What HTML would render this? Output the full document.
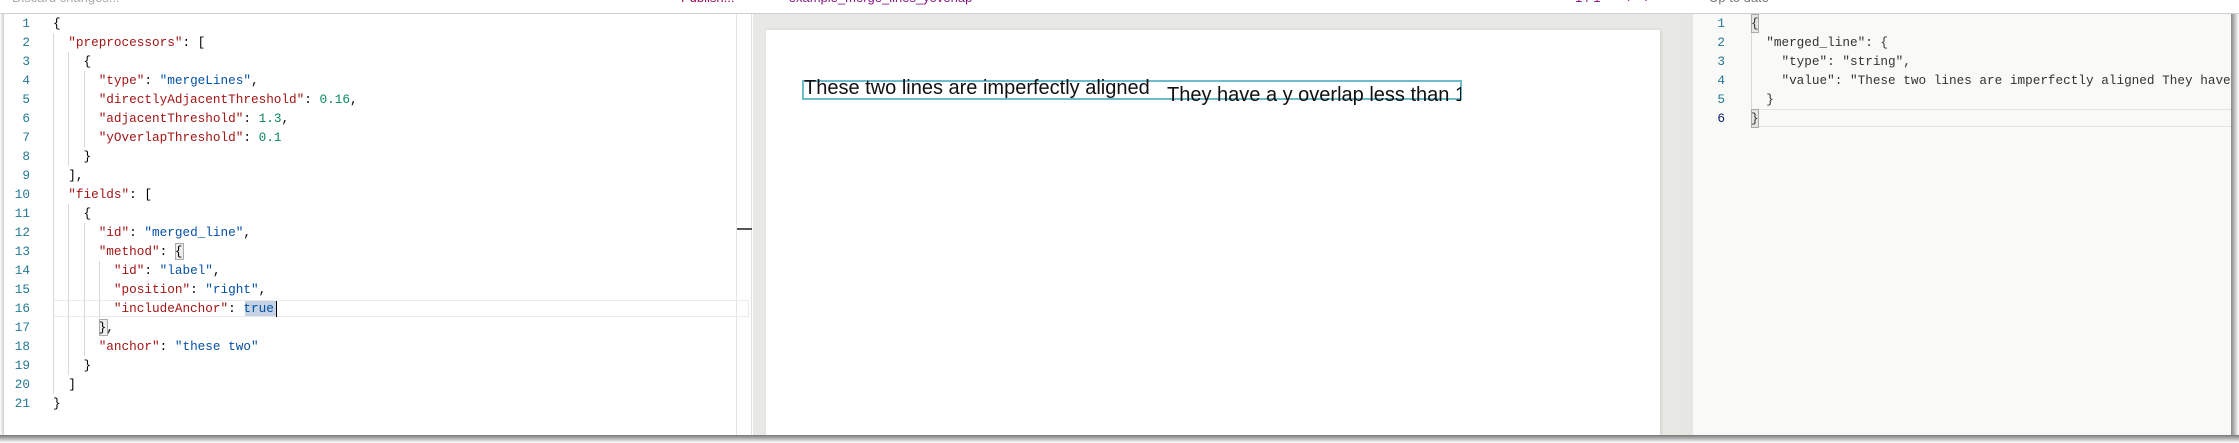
<!DOCTYPE html>
<html><head><meta charset="utf-8"><style>
*{margin:0;padding:0;box-sizing:border-box}
body{width:2239px;height:443px;background:#fff;position:relative;overflow:hidden;font-family:"Liberation Mono",monospace}
.abs{position:absolute}
.ln{position:absolute;width:30px;text-align:right;color:#237893;font-size:12.7px;line-height:19px}
.code{position:absolute;font-size:12.7px;line-height:19px;white-space:pre;color:#000}
.k{color:#a31515}.s{color:#0451a5}.n{color:#098658}
.g{position:absolute;width:1px;background:#d8d8d8}
.top{position:absolute;top:-10px;font-family:"Liberation Sans",sans-serif;font-size:13px}
</style></head><body>
<!-- top bar -->
<div class="top" style="left:12px;color:#aaa">Discard changes...</div>
<div class="top" style="left:681px;color:#a0105a">Publish...</div>
<div class="top" style="left:777px;color:#8a1a8a">•&nbsp; example_merge_lines_yoverlap</div>
<div class="top" style="left:1567px;color:#8a1a8a">• 1 / 1 &nbsp;&nbsp;&nbsp;&nbsp;&nbsp; ‹ &nbsp;&nbsp; ›</div>
<div class="top" style="left:1709px;color:#777">Up to date</div>
<div class="abs" style="left:0;top:13px;width:2239px;height:1px;background:#d0d0d0"></div>

<!-- left editor -->
<div class="abs" style="left:4px;top:14px;width:748px;height:421px;background:#fff;border-right:1px solid #e0e0e0"></div>
<div class="abs" style="left:736px;top:14px;width:1px;height:421px;background:#e4e4e4"></div>
<div class="abs" style="left:737px;top:228px;width:15px;height:2px;background:#555"></div>
<div class="abs" style="left:53px;top:300px;width:696px;height:17px;border:1px solid #eaeaea"></div>
<div class="abs" style="left:245px;top:301px;width:31px;height:15px;background:#c4d2e4"></div>
<div class="abs" style="left:276px;top:301px;width:1px;height:16px;background:#000"></div>
<div class="abs" style="left:175px;top:243px;width:9px;height:17px;border:1px solid #aaa;background:#eee"></div>
<div class="abs" style="left:99px;top:319px;width:9px;height:17px;border:1px solid #aaa;background:#eee"></div>
<div class="g" style="left:53px;top:33px;height:361px"></div>
<div class="g" style="left:68px;top:52px;height:114px"></div>
<div class="g" style="left:84px;top:71px;height:76px"></div>
<div class="g" style="left:68px;top:204px;height:171px"></div>
<div class="g" style="left:84px;top:223px;height:133px"></div>
<div class="g" style="left:99px;top:261px;height:57px"></div>
<div class="ln" style="left:0;top:14px">1<br>2<br>3<br>4<br>5<br>6<br>7<br>8<br>9<br>10<br>11<br>12<br>13<br>14<br>15<br>16<br>17<br>18<br>19<br>20<br>21</div>
<div class="code" style="left:53px;top:14px">{
  <span class="k">"preprocessors"</span>: [
    {
      <span class="k">"type"</span>: <span class="s">"mergeLines"</span>,
      <span class="k">"directlyAdjacentThreshold"</span>: <span class="n">0.16</span>,
      <span class="k">"adjacentThreshold"</span>: <span class="n">1.3</span>,
      <span class="k">"yOverlapThreshold"</span>: <span class="n">0.1</span>
    }
  ],
  <span class="k">"fields"</span>: [
    {
      <span class="k">"id"</span>: <span class="s">"merged_line"</span>,
      <span class="k">"method"</span>: {
        <span class="k">"id"</span>: <span class="s">"label"</span>,
        <span class="k">"position"</span>: <span class="s">"right"</span>,
        <span class="k">"includeAnchor"</span>: <span class="s">true</span>
      },
      <span class="k">"anchor"</span>: <span class="s">"these two"</span>
    }
  ]
}</div>

<!-- middle preview -->
<div class="abs" style="left:753px;top:14px;width:940px;height:421px;background:#e8e8e4"></div>
<div class="abs" style="left:766px;top:30px;width:894px;height:405px;background:#fff;box-shadow:1px 0 3px #ccc"></div>
<div class="abs" style="left:802px;top:80px;width:660px;height:20px;border:2px solid #6cbccb"></div>
<div class="abs" style="left:804px;top:77px;font-family:'Liberation Sans',sans-serif;font-size:20px;color:#111;white-space:nowrap">These two lines are imperfectly aligned</div>
<div class="abs" style="left:1167px;top:84px;width:294px;height:26px;overflow:hidden"><div style="font-family:'Liberation Sans',sans-serif;font-size:20px;color:#111;white-space:nowrap">They have a y overlap less than 1</div></div>

<!-- right output -->
<div class="abs" style="left:1693px;top:14px;width:538px;height:421px;background:#f9f9f7;overflow:hidden">
 <div class="abs" style="left:58px;top:95px;width:480px;height:18px;border-top:1px solid #e4e4e4;border-bottom:1px solid #e4e4e4"></div>
 <div class="abs" style="left:58px;top:0;width:8px;height:19px;border:1px solid #aaa;background:#e6e6e0"></div>
 <div class="abs" style="left:58px;top:95px;width:8px;height:19px;border:1px solid #aaa;background:#e6e6e0"></div>
 <div class="g" style="left:58px;top:19px;height:76px"></div>
 <div class="ln" style="left:2px;top:0;width:30px">1<br>2<br>3<br>4<br>5<br><span style="color:#0b216f">6</span></div>
 <div class="code" style="left:58px;top:0;color:#333">{
  "merged_line": {
    "type": "string",
    "value": "These two lines are imperfectly aligned They have a y overlap less than 1"
  }
}</div>
</div>
<div class="abs" style="left:1680px;top:14px;width:13px;height:421px;background:#e6e6e2"></div>
<div class="abs" style="left:2231px;top:14px;width:8px;height:421px;background:linear-gradient(90deg,#888,#fff)"></div>
<div class="abs" style="left:0;top:435px;width:2239px;height:8px;background:linear-gradient(#777,#fff)"></div>
<div class="abs" style="left:0;top:14px;width:4px;height:421px;background:linear-gradient(90deg,#fff,#ccc)"></div>
</body></html>
